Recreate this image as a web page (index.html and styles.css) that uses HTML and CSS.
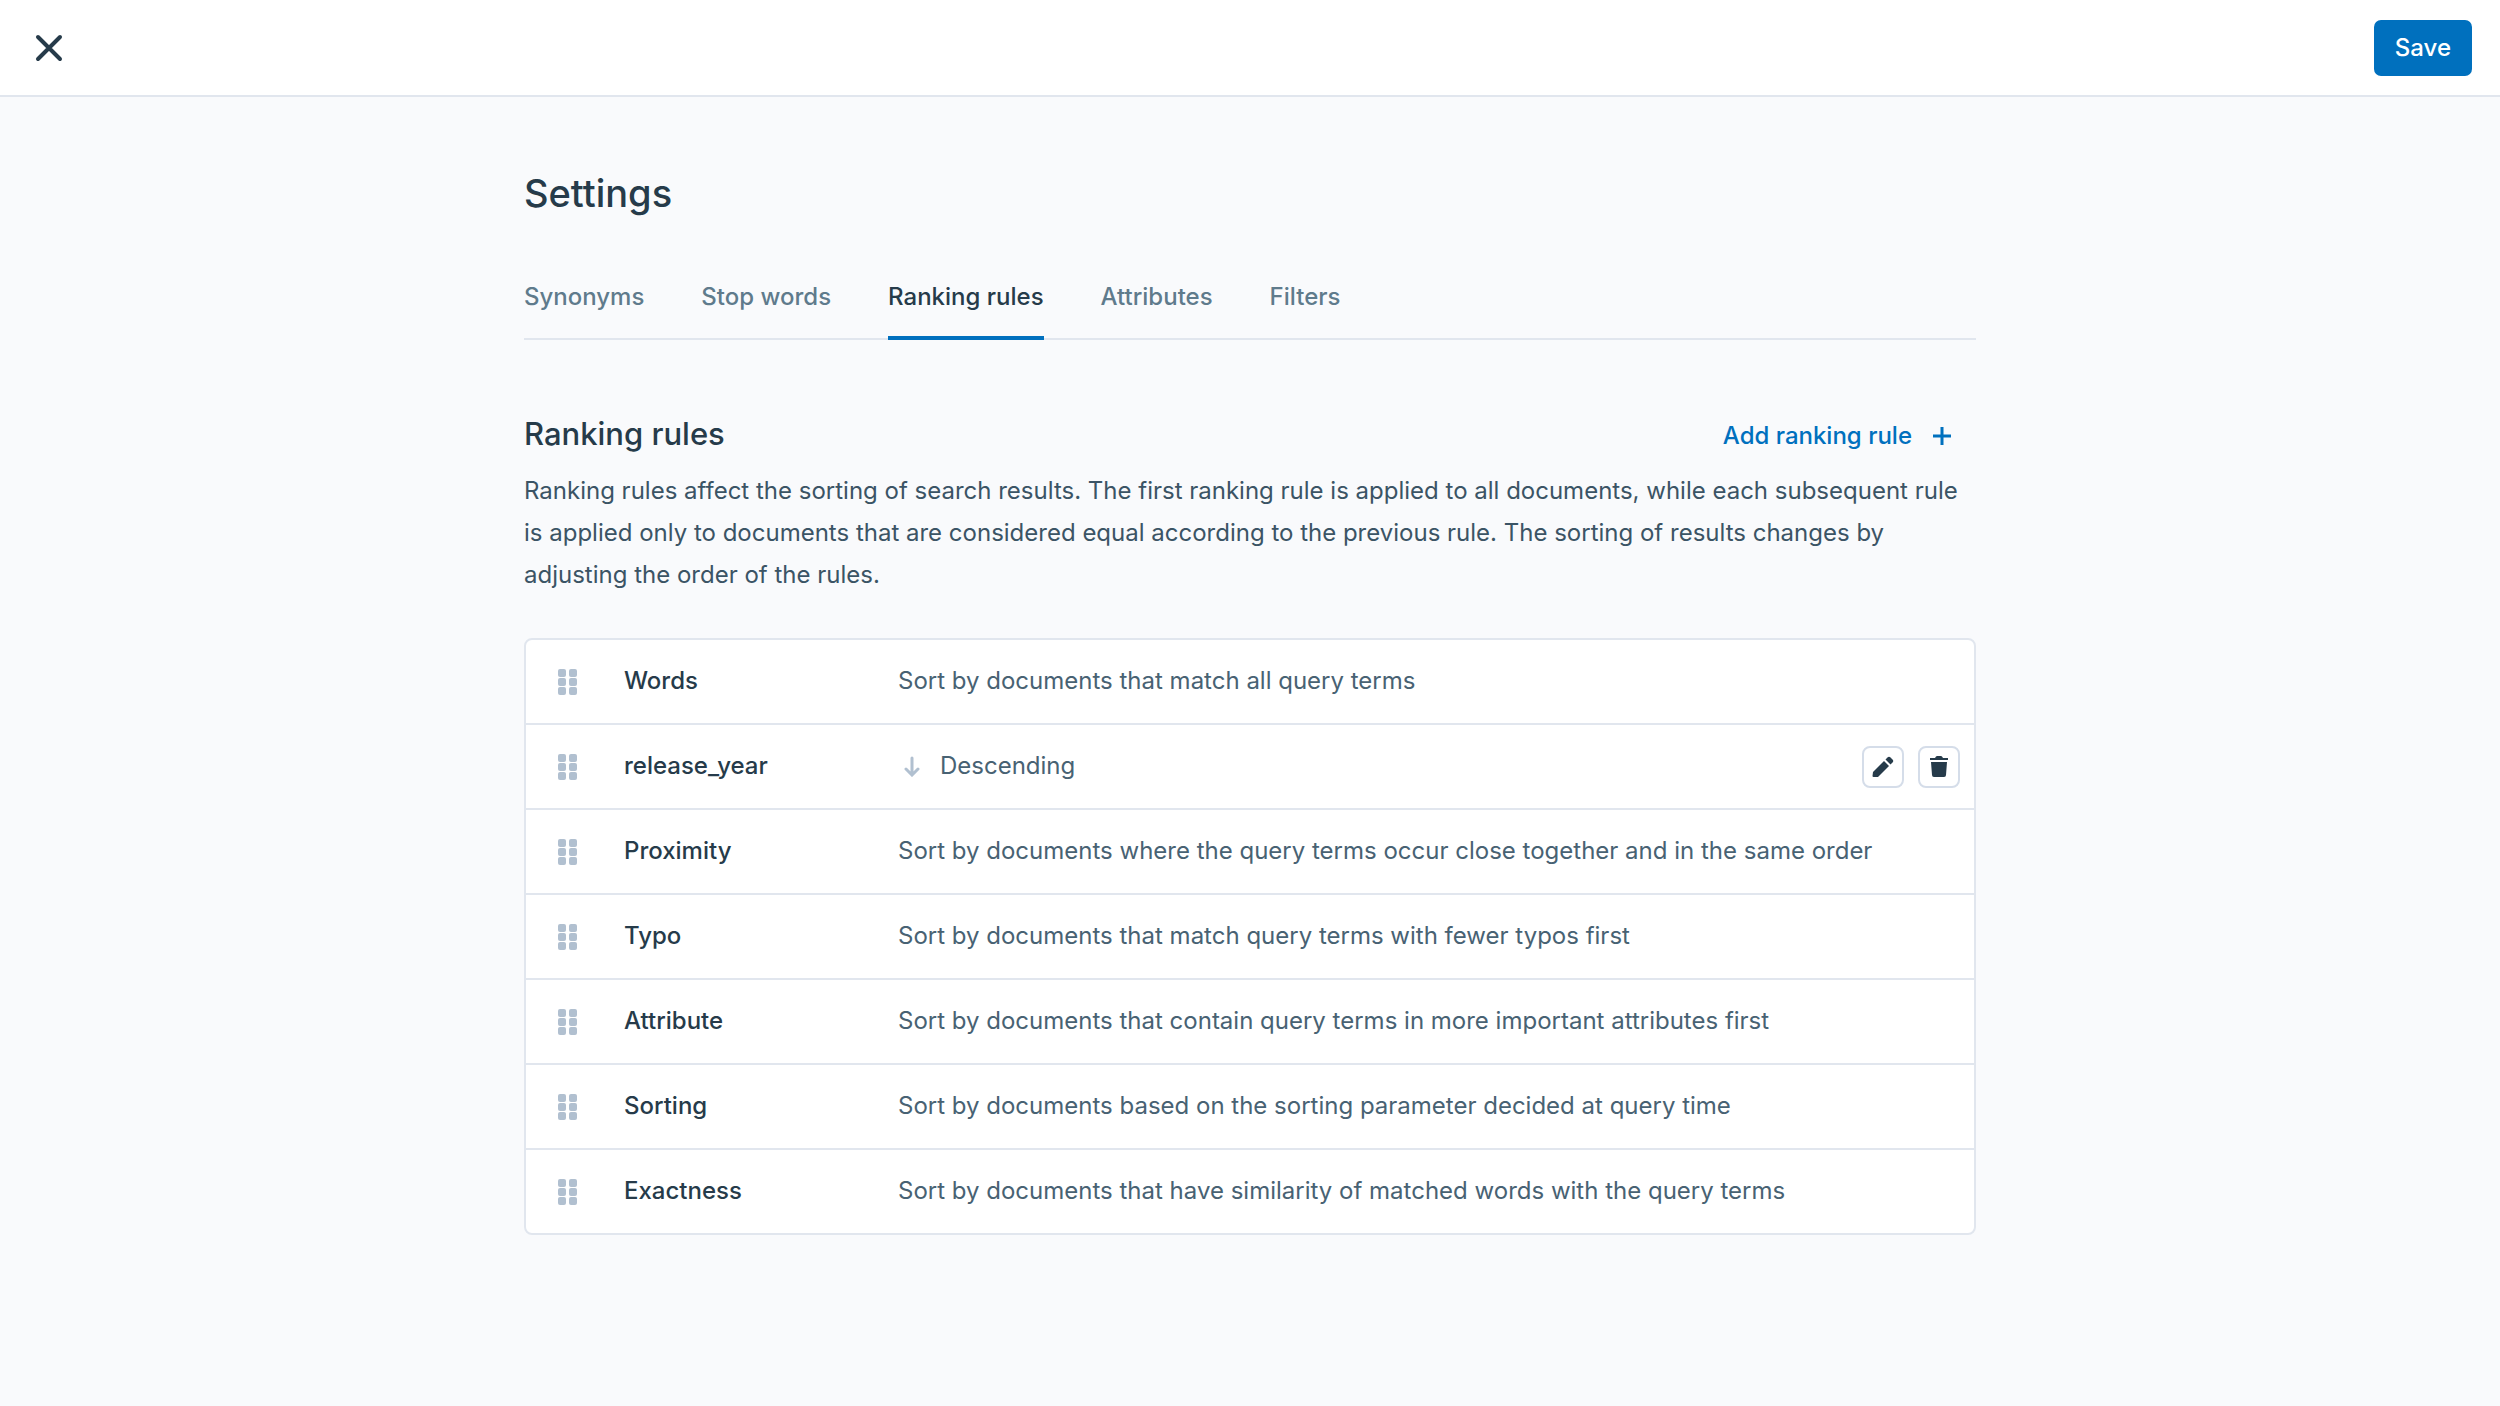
FILE: index.html
```html
<!DOCTYPE html>
<html lang="en">
<head>
  <meta charset="UTF-8" />
  <meta name="viewport" content="width=device-width, initial-scale=1.0" />
  <title>Settings - Ranking rules</title>
  <link rel="stylesheet" href="styles.css">
</head>
<body>
  <!-- icons shared by the rows -->
  <svg class="sprite" aria-hidden="true">
    <symbol id="icon-drag" viewBox="0 0 20 26">
      <rect x="0" y="0" width="8" height="8" rx="2" />
      <rect x="11" y="0" width="8" height="8" rx="2" />
      <rect x="0" y="9" width="8" height="8" rx="2" />
      <rect x="11" y="9" width="8" height="8" rx="2" />
      <rect x="0" y="18" width="8" height="8" rx="2" />
      <rect x="11" y="18" width="8" height="8" rx="2" />
    </symbol>
  </svg>

  <header class="topbar">
    <button class="close-btn" type="button" aria-label="Close">
      <svg width="28" height="28" viewBox="0 0 28 28" fill="none" stroke="currentColor" stroke-width="4" stroke-linecap="round">
        <path d="M3 3l22 22M25 3L3 25" />
      </svg>
    </button>
    <button class="save-btn" type="button">Save</button>
  </header>

  <main class="content">
    <h1>Settings</h1>

    <nav class="tabs">
      <a href="#synonyms">Synonyms</a>
      <a href="#stop-words">Stop words</a>
      <a href="#ranking-rules" class="active" aria-current="page">Ranking rules</a>
      <a href="#attributes">Attributes</a>
      <a href="#filters">Filters</a>
    </nav>

    <section id="ranking-rules">
      <div class="section-head">
        <h2>Ranking rules</h2>
        <button class="add-btn" type="button">
          Add ranking rule
          <svg width="20" height="20" viewBox="0 0 20 20" fill="none" stroke="currentColor" stroke-width="3">
            <path d="M10 1v18M1 10h18" />
          </svg>
        </button>
      </div>
      <p class="intro">Ranking rules affect the sorting of search results. The first ranking rule is applied to all documents, while each subsequent rule is applied only to documents that are considered equal according to the previous rule. The sorting of results changes by adjusting the order of the rules.</p>

      <ol class="rules">
        <li class="rule">
          <button class="drag" type="button" aria-label="Move Words"><svg width="20" height="26"><use href="#icon-drag" /></svg></button>
          <span class="rule-name">Words</span>
          <span class="rule-text">Sort by documents that match all query terms</span>
        </li>
        <li class="rule">
          <button class="drag" type="button" aria-label="Move release_year"><svg width="20" height="26"><use href="#icon-drag" /></svg></button>
          <span class="rule-name">release_year</span>
          <span class="rule-text">
            <svg class="arrow" width="28" height="22" viewBox="0 0 28 22" fill="none" stroke="currentColor" stroke-width="3" stroke-linecap="round">
              <path d="M14 3v16M8 14l6 6 6-6" />
            </svg>
            Descending
          </span>
          <span class="rule-actions">
            <button class="icon-btn" type="button" aria-label="Edit">
              <svg width="24" height="24" viewBox="0 0 24 24" fill="currentColor">
                <path d="M2 17L13 6l5 5L7 22H2.500q-1 0-1-1z" />
                <path d="M14.500 4.500l2-2q1.500-1.500 3 0l2 2q1.500 1.500 0 3l-2 2z" />
              </svg>
            </button>
            <button class="icon-btn" type="button" aria-label="Delete">
              <svg width="24" height="24" viewBox="0 0 24 24" fill="currentColor">
                <path d="M3 3h5q1-2 2-2h4q1 0 2 2h5v2H3z" />
                <path d="M4 7h16l-1 13q0 2-2 2H7q-2 0-2-2z" />
              </svg>
            </button>
          </span>
        </li>
        <li class="rule">
          <button class="drag" type="button" aria-label="Move Proximity"><svg width="20" height="26"><use href="#icon-drag" /></svg></button>
          <span class="rule-name">Proximity</span>
          <span class="rule-text">Sort by documents where the query terms occur close together and in the same order</span>
        </li>
        <li class="rule">
          <button class="drag" type="button" aria-label="Move Typo"><svg width="20" height="26"><use href="#icon-drag" /></svg></button>
          <span class="rule-name">Typo</span>
          <span class="rule-text">Sort by documents that match query terms with fewer typos first</span>
        </li>
        <li class="rule">
          <button class="drag" type="button" aria-label="Move Attribute"><svg width="20" height="26"><use href="#icon-drag" /></svg></button>
          <span class="rule-name">Attribute</span>
          <span class="rule-text">Sort by documents that contain query terms in more important attributes first</span>
        </li>
        <li class="rule">
          <button class="drag" type="button" aria-label="Move Sorting"><svg width="20" height="26"><use href="#icon-drag" /></svg></button>
          <span class="rule-name">Sorting</span>
          <span class="rule-text">Sort by documents based on the sorting parameter decided at query time</span>
        </li>
        <li class="rule">
          <button class="drag" type="button" aria-label="Move Exactness"><svg width="20" height="26"><use href="#icon-drag" /></svg></button>
          <span class="rule-name">Exactness</span>
          <span class="rule-text">Sort by documents that have similarity of matched words with the query terms</span>
        </li>
      </ol>
    </section>
  </main>
</body>
</html>
```

FILE: styles.css
```css
* {
  box-sizing: border-box;
}
body {
  margin: 0;
  background-color: #f9fafc;
  color: #263b4a;
  font-family: Inter, "Liberation Sans", sans-serif;
  font-size: 24px;
  line-height: 32px;
}
button {
  font: inherit;
  padding: 0;
  border: none;
  background: none;
  color: inherit;
  cursor: pointer;
}
svg {
  display: block;
}
.sprite {
  display: none;
}

/* top bar */
.topbar {
  display: flex;
  justify-content: space-between;
  align-items: center;
  padding: 20px 28px 19px 35px;
  background-color: #fff;
  border-bottom: 2px solid #e1e6ee;
}
.save-btn {
  padding: 12px 21px;
  border-radius: 7px;
  background-color: #0070be;
  color: #fff;
  font-weight: 500;
}

.content {
  max-width: 1452px;
  margin: 0 auto;
  padding: 72px 0;
}
h1 {
  margin: 0 0 56px;
  font-size: 38px;
  line-height: 48px;
  font-weight: 500;
}

/* tabs */
.tabs {
  display: flex;
  gap: 57px;
  box-shadow: inset 0 -2px #e1e6ee;
}
.tabs a {
  padding: 8px 0 23px;
  border-bottom: 4px solid transparent;
  color: #5f7b8c;
  font-weight: 500;
  text-decoration: none;
}
.tabs a.active {
  color: #263b4a;
  border-bottom-color: #0070be;
}

/* ranking rules */
.section-head {
  display: flex;
  justify-content: space-between;
  align-items: flex-end;
  margin-top: 74px;
}
h2 {
  margin: 0;
  font-size: 31px;
  line-height: 40px;
  font-weight: 500;
}
.add-btn {
  display: flex;
  align-items: center;
  gap: 20px;
  margin-right: 24px;
  padding-bottom: 2px;
  color: #0070be;
  font-weight: 500;
}
.intro {
  margin: 16px 0 42px;
  color: #3b5465;
  line-height: 42px;
}
.rules {
  margin: 0;
  padding: 0;
  list-style: none;
  background-color: #fff;
  border: 2px solid #e1e6ee;
  border-radius: 8px;
}
.rule {
  display: grid;
  grid-template-columns: 66px 274px 1fr auto;
  align-items: center;
  min-height: 85px;
  padding: 0 14px 0 32px;
  border-bottom: 2px solid #e1e6ee;
}
.rule:last-child {
  min-height: 83px;
  border-bottom: none;
}
.drag {
  justify-self: start;
  cursor: grab;
}
.drag svg {
  fill: #b1c0d0;
}
.rule-name,
.rule-text {
  padding-bottom: 2px;
}
.rule-name {
  font-weight: 500;
}
.rule-text {
  display: flex;
  align-items: center;
  gap: 14px;
  color: #486273;
}
.arrow {
  color: #b1c0d0;
}
.rule-actions {
  display: flex;
  gap: 14px;
}
.icon-btn {
  display: flex;
  justify-content: center;
  align-items: center;
  width: 42px;
  height: 42px;
  border: 2px solid #d5dde9;
  border-radius: 8px;
}
```
